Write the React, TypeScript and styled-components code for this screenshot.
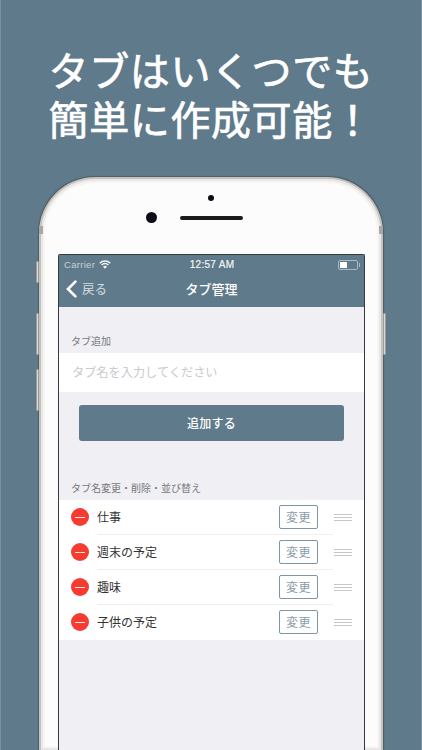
import React from "react";
import styled, { createGlobalStyle } from "styled-components";

const Global = createGlobalStyle`
  html, body { margin: 0; padding: 0; background: #5f7a8a; }
  * { box-sizing: border-box; }
`;
const CJK = `"Noto Sans CJK JP", "Noto Sans", sans-serif`;
const Page = styled.div`
  width: 422px; height: 750px; overflow: hidden; background: #5f7a8a;
  box-shadow: inset 1px 0 0 #7a909d, inset -1px 0 0 #7a909d;
  font-family: ${CJK}; display: flex; flex-direction: column; align-items: center;
`;
const Headline = styled.h1`
  margin: 0; padding-top: 45px; height: 177px; flex: none; width: 100%; text-align: center;
  color: #fff; font-size: 40px; line-height: 49px; font-weight: 400; letter-spacing: 0.6px;
  -webkit-text-stroke: 0.7px #fff;
`;
const Phone = styled.div`
  position: relative; width: 344px; flex: none; height: 573px; padding: 0 16px 0 17px;
  background: #fcfcfc; border: 2px solid #c4c1be; border-bottom: 0;
  border-radius: 56px 56px 0 0;
  box-shadow: 0 0 1px 0.5px rgba(50, 50, 50, .4), inset 0 0 0 2px #e9e7e5, inset 0 0 0 4px #f6f6f5;
  display: flex; flex-direction: column;
`;
const SideKey = styled.span<{ $top: number; $h: number; $right?: boolean }>`
  position: absolute; top: ${p => p.$top}px; width: 3px; height: ${p => p.$h}px;
  ${p => (p.$right ? "right: -5px" : "left: -5px")};
  background: #dcdad8; border: 1px solid #9b9b9b; border-radius: 1px;
`;
const Band = styled.span<{ $side: "left" | "right" }>`
  position: absolute; top: 47px; ${p => p.$side}: -2px; width: 4px; height: 8px; background: #a9a7a4;
`;
const Bezel = styled.div`
  height: 75px; flex: none; position: relative;
`;
const Dot = styled.span<{ $x: number; $y: number; $s: number }>`
  position: absolute; left: ${p => p.$x}px; top: ${p => p.$y}px;
  width: ${p => p.$s}px; height: ${p => p.$s}px; border-radius: 50%; background: #0d0c17;
`;
const Speaker = styled.span`
  position: absolute; left: 122px; top: 37px; width: 63px; height: 4px; border-radius: 2px; background: #1b1a1c;
`;
const Screen = styled.div`
  flex: 1; border: 1.5px solid #333a40; border-bottom: 0; border-radius: 2px 2px 0 0;
  background: #efeff4; display: flex; flex-direction: column; min-height: 0;
`;
const Header = styled.header`
  background: #5f7a8a; height: 52px; flex: none; color: #fff; display: flex; flex-direction: column;
`;
const StatusBar = styled.div`
  height: 19px; display: grid; grid-template-columns: 1fr auto 1fr; align-items: center;
  padding: 0 6px 0 5px; font-family: "Liberation Sans", sans-serif; font-size: 9.5px; letter-spacing: .3px;
`;
const Carrier = styled.div`
  display: flex; align-items: center; gap: 4px; color: #c8d2d9;
`;
const Clock = styled.div`
  color: #f2f5f6; font-size: 10px; letter-spacing: .3px; margin-left: 2px; -webkit-text-stroke: 0.2px #f2f5f6;
`;
const Battery = styled.div`
  justify-self: end; width: 20px; height: 10px; border: 1px solid #a9b8c1; border-radius: 2px; padding: 1px; position: relative;
  &::before { content: ""; display: block; width: 7px; height: 100%; background: #fff; }
  &::after { content: ""; position: absolute; right: -3px; top: 2px; width: 1px; height: 4px; background: #a9b8c1; }
`;
const NavBar = styled.nav`
  position: relative; flex: 1; display: flex; align-items: center; justify-content: center;
  font-size: 13px; font-weight: 500; padding-bottom: 5px;
`;
const Back = styled.div`
  position: absolute; left: 7px; top: 5px; display: flex; align-items: center; gap: 5px;
  font-weight: 400; font-size: 12.5px; line-height: 20px; color: #d5dde2;
`;
const Body = styled.main`
  flex: 1; display: flex; flex-direction: column;
`;
const SectionLabel = styled.div<{ $top: number }>`
  padding: ${p => p.$top}px 0 3px 12px; font-size: 10px; line-height: 18px; color: #77777c;
`;
const InputRow = styled.div`
  height: 39px; background: #fff; display: flex; align-items: center; padding: 0 0 2px 13px;
  font-size: 12.2px; color: #c9c9ce;
`;
const AddButton = styled.button`
  height: 36px; margin: 13px 20px 0; padding: 0 0 2px; border: 0; border-radius: 3px; background: #5f7a8a; color: #fff;
  font: 500 12px ${CJK}; letter-spacing: .3px; flex: none;
`;
const List = styled.ul`
  list-style: none; margin: 0; padding: 0; background: #fff;
`;
const Row = styled.li`
  height: 35px; position: relative; display: flex; align-items: center; padding: 0 12px 1px;
  &:not(:last-child)::after {
    content: ""; position: absolute; left: 38px; right: 31px; bottom: 0; height: 1px; background: #eeeeee;
  }
`;
const Minus = styled.span`
  width: 18px; height: 18px; border-radius: 50%; background: #f63c31; flex: none; display: flex; align-items: center; justify-content: center;
  &::before { content: ""; width: 10px; height: 1px; background: #fde4e2; }
`;
const Name = styled.span`
  margin: 0 0 1px 8px; flex: 1; font-size: 12px; line-height: 18px; color: #333;
`;
const EditButton = styled.button`
  width: 39px; height: 24px; padding: 0 0 1px; background: #fff; border: 1px solid #7f96a3; border-radius: 2px;
  font: 400 12px ${CJK}; color: #8a9ca8; letter-spacing: .4px; flex: none;
`;
const Grip = styled.span`
  margin-left: 16px; width: 18px; height: 7px; flex: none;
  border-top: 1px solid #c6c6c8; border-bottom: 1px solid #c6c6c8; position: relative;
  &::before { content: ""; position: absolute; left: 0; right: 0; top: 2px; height: 1px; background: #c6c6c8; }
`;

const Wifi = () => (
  <svg width="12" height="9" viewBox="0 0 12 9" fill="none" stroke="#f0f3f5" strokeWidth="1.5">
    <path d="M.7 3.2a7.5 7.5 0 0 1 10.6 0" />
    <path d="M2.6 5a4.8 4.8 0 0 1 6.8 0" />
    <path d="M6 8.8 4 6.7a2.8 2.8 0 0 1 4 0Z" fill="#f0f3f5" stroke="none" />
  </svg>
);
const Chevron = () => (
  <svg width="11" height="18" viewBox="0 0 11 18" fill="none" stroke="#fff" strokeWidth="2.7" strokeLinecap="round">
    <path d="M9.4 1.6 2 9l7.4 7.4" />
  </svg>
);

const tabs = ["仕事", "週末の予定", "趣味", "子供の予定"];

export default function App() {
  return (
    <Page>
      <Global />
      <Headline>タブはいくつでも<br />簡単に作成可能！</Headline>
      <Phone>
        <SideKey $top={82} $h={22} />
        <SideKey $top={134} $h={42} />
        <SideKey $top={190} $h={42} />
        <SideKey $top={134} $h={42} $right />
        <Band $side="left" />
        <Band $side="right" />
        <Bezel>
          <Dot $x={88} $y={33} $s={11} />
          <Dot $x={150} $y={16} $s={6} />
          <Speaker />
        </Bezel>
        <Screen>
          <Header>
            <StatusBar>
              <Carrier>Carrier <Wifi /></Carrier>
              <Clock>12:57 AM</Clock>
              <Battery />
            </StatusBar>
            <NavBar>
              <Back><Chevron />戻る</Back>
              タブ管理
            </NavBar>
          </Header>
          <Body>
            <SectionLabel $top={25}>タブ追加</SectionLabel>
            <InputRow>タブ名を入力してください</InputRow>
            <AddButton>追加する</AddButton>
            <SectionLabel $top={38}>タブ名変更・削除・並び替え</SectionLabel>
            <List>
              {tabs.map(t => (
                <Row key={t}>
                  <Minus />
                  <Name>{t}</Name>
                  <EditButton>変更</EditButton>
                  <Grip />
                </Row>
              ))}
            </List>
          </Body>
        </Screen>
      </Phone>
    </Page>
  );
}
